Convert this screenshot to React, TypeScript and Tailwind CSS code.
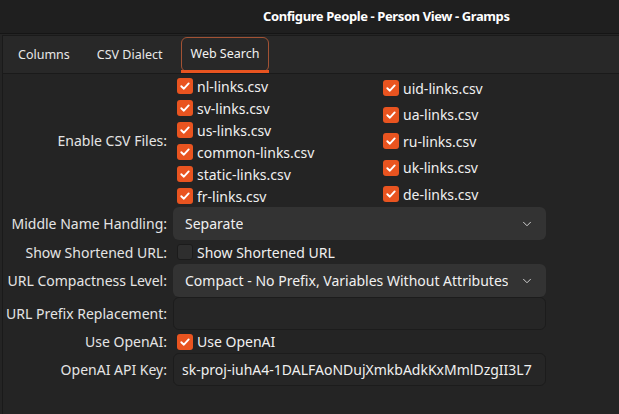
import { ChevronDown } from 'lucide-react';

const leftFiles = ['nl-links.csv', 'sv-links.csv', 'us-links.csv', 'common-links.csv', 'static-links.csv', 'fr-links.csv'];
const rightFiles = ['uid-links.csv', 'ua-links.csv', 'ru-links.csv', 'uk-links.csv', 'de-links.csv'];

function Check({ checked = true }: { checked?: boolean }) {
  if (!checked) {
    return <span className="block w-[16px] h-[16px] rounded-[3px] bg-[#2e2e2e] border border-[#1b1b1b] shrink-0" />;
  }
  return (
    <span className="flex items-center justify-center w-[16px] h-[16px] rounded-[3px] bg-[#e95420] shrink-0">
      <svg width="12" height="12" viewBox="0 0 12 12" fill="none">
        <path d="M2.3 6.2 L4.9 8.7 L9.7 3.4" stroke="#ffffff" strokeWidth="1.9" strokeLinecap="round" strokeLinejoin="round" />
      </svg>
    </span>
  );
}

function CheckItem({ label, checked = true }: { label: string; checked?: boolean }) {
  return (
    <div className="flex items-center h-[22px] pl-[4px] gap-[4px]">
      <Check checked={checked} />
      <span>{label}</span>
    </div>
  );
}

function Label({ children }: { children: string }) {
  return <div className="w-[164px] shrink-0 text-right text-[#e4e4e4]">{children}</div>;
}

function Combo({ value }: { value: string }) {
  return (
    <div className="w-[373px] h-[33px] rounded-[6px] bg-[#333333] flex items-center pl-[12px] pr-[12px] justify-between">
      <span className="whitespace-nowrap overflow-hidden">{value}</span>
      <ChevronDown className="w-[14px] h-[14px] text-[#dcdcdc] shrink-0 ml-[4px]" strokeWidth={1.6} />
    </div>
  );
}

function Entry({ value }: { value?: string }) {
  return (
    <div className="w-[373px] h-[33px] rounded-[6px] bg-[#262626] border border-[#1c1c1c] flex items-center pl-[8px] overflow-hidden">
      <span className="whitespace-nowrap">{value}</span>
    </div>
  );
}

export default function App() {
  return (
    <div
      className="w-[619px] h-[414px] bg-[#242424] text-[#f0f0f0] text-[14px] overflow-hidden flex flex-col"
      style={{ fontFamily: '"Noto Sans", "Open Sans", sans-serif' }}
    >
      {/* header bar */}
      <div className="h-[34px] shrink-0 bg-[#1f1f1f] flex items-center pl-[263px] border-b border-[#151515]">
        <span className="font-bold text-white text-[13px] tracking-[-0.4px] whitespace-nowrap">Configure People - Person View - Gramps</span>
      </div>

      {/* notebook */}
      <div className="flex-1 ml-[2px] mt-[1px] border-l border-t border-[#1a1a1a] flex flex-col">
        <div className="h-[38px] shrink-0 bg-[#282828] border-b border-[#1a1a1a] flex items-end pl-[3px] text-[12.5px]">
          <div className="h-[35px] px-[12px] flex items-center text-[#e8e8e8]">Columns</div>
          <div className="h-[35px] px-[15px] flex items-center text-[#e8e8e8]">CSV Dialect</div>
          <div className="relative h-[35px] mb-[1px] ml-[3px] px-[9px] flex items-center rounded-[6px] border border-[#a25234] text-[#f2f2f2]">
            Web Search
            <span className="absolute left-[-1px] right-[-1px] bottom-[-2px] h-[3px] bg-[#e95420]" />
          </div>
        </div>

        <div className="flex flex-col pt-[1px]">
          {/* CSV files */}
          <div className="flex items-center h-[131px]">
            <Label>Enable CSV Files:</Label>
            <div className="ml-[6px] grid grid-cols-[206px_1fr] h-full">
              <div className="flex flex-col">
                {leftFiles.map((f) => (
                  <CheckItem key={f} label={f} />
                ))}
              </div>
              <div className="flex flex-col justify-between py-[2px]">
                {rightFiles.map((f) => (
                  <CheckItem key={f} label={f} />
                ))}
              </div>
            </div>
          </div>

          <div className="flex items-center mt-[1px]">
            <Label>Middle Name Handling:</Label>
            <div className="ml-[6px]">
              <Combo value="Separate" />
            </div>
          </div>

          <div className="flex items-center h-[24px]">
            <Label>Show Shortened URL:</Label>
            <div className="ml-[6px]">
              <CheckItem label="Show Shortened URL" checked={false} />
            </div>
          </div>

          <div className="flex items-center">
            <Label>URL Compactness Level:</Label>
            <div className="ml-[6px]">
              <Combo value="Compact - No Prefix, Variables Without Attributes" />
            </div>
          </div>

          <div className="flex items-center">
            <Label>URL Prefix Replacement:</Label>
            <div className="ml-[6px]">
              <Entry />
            </div>
          </div>

          <div className="flex items-center h-[23px]">
            <Label>Use OpenAI:</Label>
            <div className="ml-[6px]">
              <CheckItem label="Use OpenAI" />
            </div>
          </div>

          <div className="flex items-center">
            <Label>OpenAI API Key:</Label>
            <div className="ml-[6px]">
              <Entry value="sk-proj-iuhA4-1DALFAoNDujXmkbAdkKxMmlDzgII3L7" />
            </div>
          </div>
        </div>
      </div>
    </div>
  );
}
